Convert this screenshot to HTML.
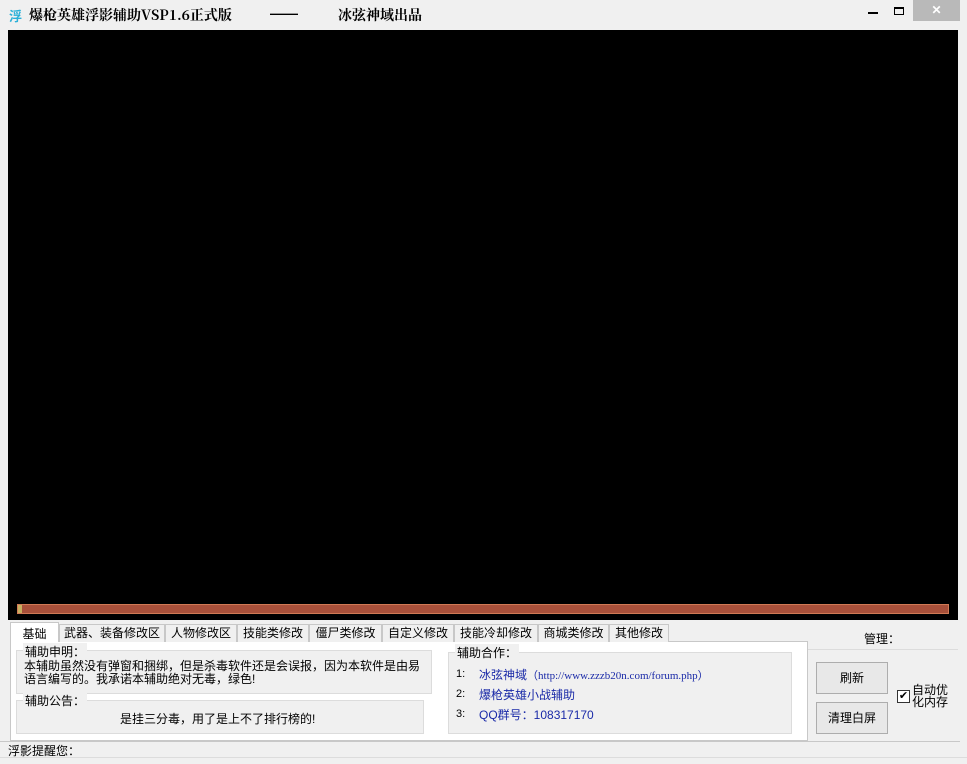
<!DOCTYPE html>
<html><head><meta charset="utf-8"><style>
*{margin:0;padding:0;box-sizing:border-box}
body{width:967px;height:764px;background:#f0f0f0;position:relative;overflow:hidden;font-family:"Liberation Sans","Noto Sans CJK SC","WenQuanYi Zen Hei",sans-serif;font-size:12px;color:#000}
.a{position:absolute;white-space:nowrap}
.tab{position:absolute;top:624px;height:18px;border:1px solid #c8c8c8;border-bottom:none;background:#f0f0f0;font-size:12px;line-height:16px;text-align:center}
.gb{position:absolute;background:#f0f0f0;border:1px solid #dcdcdc}
.btn{position:absolute;background:#e8e8e8;border:1px solid #adadad;text-align:center;font-size:12px}
</style></head><body>
<div class="a" style="left:9px;top:6px;color:#2ab0d8;font-size:13px;font-weight:bold">浮</div>
<div class="a" style="left:29px;top:5px;font-size:14px;font-weight:bold;font-family:'Noto Serif CJK SC','Liberation Serif',serif">爆枪英雄浮影辅助VSP1.6正式版</div>
<div class="a" style="left:270px;top:5px;font-size:14px;font-weight:bold">——</div>
<div class="a" style="left:338px;top:5px;font-size:14px;font-weight:bold;font-family:'Noto Serif CJK SC',serif">冰弦神域出品</div>
<div class="a" style="left:868px;top:12px;width:10px;height:2px;background:#000"></div>
<div class="a" style="left:894px;top:7px;width:10px;height:8px;border:1px solid #000;border-top-width:2px"></div>
<div class="a" style="left:913px;top:0;width:47px;height:21px;background:#b9b9b9;color:#fff;text-align:center;font-size:12px;line-height:21px;font-weight:bold">✕</div>
<div class="a" style="left:8px;top:30px;width:950px;height:590px;background:#000"></div>
<div class="a" style="left:17px;top:604px;width:932px;height:10px;background:#a8503a;border:1px solid #d07a55"></div>
<div class="a" style="left:18px;top:605px;width:4px;height:8px;background:#c8b060"></div>
<div class="a" style="left:10px;top:641px;width:798px;height:100px;background:#fff;border:1px solid #c8c8c8"></div>
<div class="tab" style="left:10px;width:49px;background:#fff;top:622px;height:20px;line-height:22px">基础</div>
<div class="tab" style="left:59px;width:106px">武器、装备修改区</div>
<div class="tab" style="left:165px;width:72px">人物修改区</div>
<div class="tab" style="left:237px;width:72px">技能类修改</div>
<div class="tab" style="left:309px;width:73px">僵尸类修改</div>
<div class="tab" style="left:382px;width:72px">自定义修改</div>
<div class="tab" style="left:454px;width:84px">技能冷却修改</div>
<div class="tab" style="left:538px;width:71px">商城类修改</div>
<div class="tab" style="left:609px;width:60px">其他修改</div>
<div class="gb" style="left:16px;top:650px;width:416px;height:44px"></div>
<div class="a" style="left:23px;top:643px;background:#f0f0f0;padding:0 2px">辅助申明：</div>
<div class="a" style="left:24px;top:660px;line-height:13px">本辅助虽然没有弹窗和捆绑，但是杀毒软件还是会误报，因为本软件是由易<br>语言编写的。我承诺本辅助绝对无毒，绿色!</div>
<div class="gb" style="left:16px;top:700px;width:408px;height:34px"></div>
<div class="a" style="left:23px;top:692px;background:#f0f0f0;padding:0 2px">辅助公告：</div>
<div class="a" style="left:120px;top:710px">是挂三分毒，用了是上不了排行榜的!</div>
<div class="gb" style="left:448px;top:652px;width:344px;height:82px"></div>
<div class="a" style="left:455px;top:644px;background:#f0f0f0;padding:0 2px">辅助合作：</div>
<div class="a" style="left:456px;top:668px;font-size:11px">1:</div>
<div class="a" style="left:456px;top:688px;font-size:11px">2:</div>
<div class="a" style="left:456px;top:708px;font-size:11px">3:</div>
<div class="a" style="left:479px;top:666px;color:#1a2aa8">冰弦神域<span style="font-family:'Liberation Serif',serif;font-size:11px">（http://www.zzzb20n.com/forum.php）</span></div>
<div class="a" style="left:479px;top:686px;color:#1a2aa8">爆枪英雄小战辅助</div>
<div class="a" style="left:479px;top:706px;color:#1a2aa8">QQ群号：108317170</div>
<div class="a" style="left:864px;top:630px">管理：</div>
<div class="a" style="left:808px;top:649px;width:150px;height:1px;background:#dcdcdc"></div>
<div class="btn" style="left:816px;top:662px;width:72px;height:32px;line-height:30px">刷新</div>
<div class="btn" style="left:816px;top:702px;width:72px;height:32px;line-height:30px">清理白屏</div>
<div class="a" style="left:897px;top:690px;width:13px;height:13px;border:1px solid #333;background:#fff;font-size:11px;line-height:11px;text-align:center">✔</div>
<div class="a" style="left:912px;top:684px;line-height:12px;font-size:12px">自动优<br>化内存</div>
<div class="a" style="left:0;top:741px;width:960px;height:1px;background:#c8c8c8"></div>
<div class="a" style="left:8px;top:742px">浮影提醒您：</div>
<div class="a" style="left:0;top:757px;width:967px;height:1px;background:#dcdcdc"></div>
</body></html>
